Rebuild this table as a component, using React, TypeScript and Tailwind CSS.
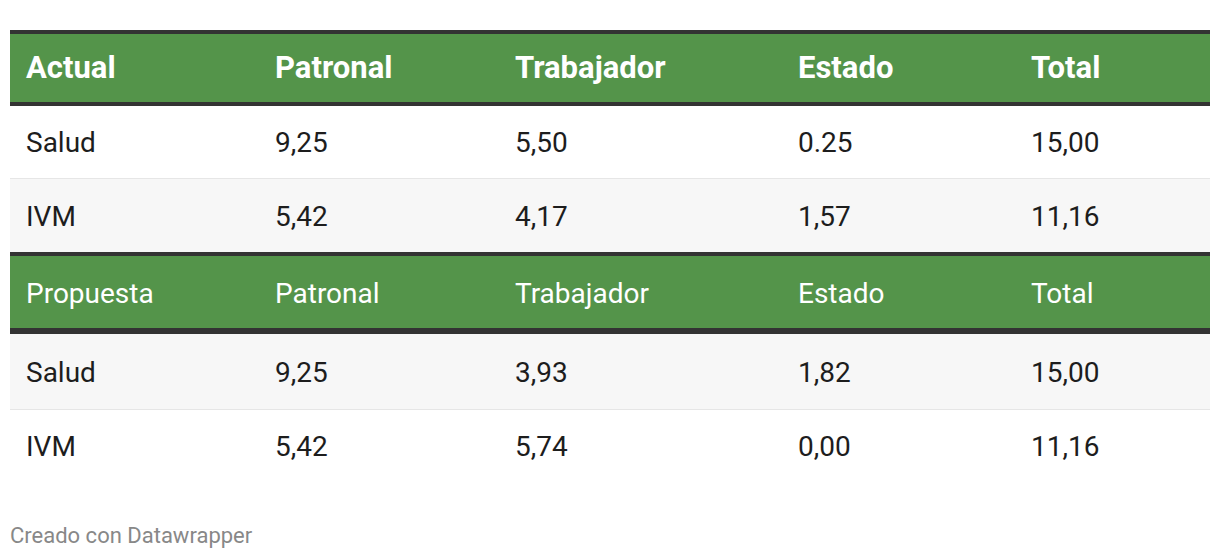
const cols = 'grid grid-cols-[249px_240px_283px_233px_195px]';

const HeaderRow = ({ cells, bold }: { cells: string[]; bold?: boolean }) => (
  <div
    className={`${cols} items-center bg-[#54944a] text-white ${
      bold ? 'h-[68px] font-bold text-[31px]' : 'h-[72px] pt-[3px] font-normal'
    }`}
  >
    {cells.map((c) => (
      <div key={c} className="pl-4">
        {c}
      </div>
    ))}
  </div>
);

const BodyRow = ({
  cells,
  shaded,
  line,
  h = 'h-[73px]',
}: {
  cells: string[];
  shaded?: boolean;
  line?: boolean;
  h?: string;
}) => (
  <div
    className={`${cols} ${h} items-center pt-[2px] text-[#1d1d1d] ${shaded ? 'bg-[#f7f7f7]' : 'bg-white'} ${
      line ? 'border-b border-[#e6e6e6]' : ''
    }`}
  >
    {cells.map((c, i) => (
      <div key={i} className="pl-4">
        {c}
      </div>
    ))}
  </div>
);

export default function App() {
  return (
    <div className="w-[1220px] h-[558px] bg-white px-[10px] pt-[30px] font-['Roboto',sans-serif] text-[28px]">
      <div className="border-t-4 border-[#333333]">
        <HeaderRow bold cells={['Actual', 'Patronal', 'Trabajador', 'Estado', 'Total']} />
        <div className="h-1 bg-[#333333]" />
        <BodyRow line cells={['Salud', '9,25', '5,50', '0.25', '15,00']} />
        <BodyRow shaded cells={['IVM', '5,42', '4,17', '1,57', '11,16']} />
        <div className="h-1 bg-[#333333]" />
        <HeaderRow cells={['Propuesta', 'Patronal', 'Trabajador', 'Estado', 'Total']} />
        <div className="h-[6px] bg-[#333333]" />
        <BodyRow shaded line h="h-[76px]" cells={['Salud', '9,25', '3,93', '1,82', '15,00']} />
        <BodyRow h="h-[72px]" cells={['IVM', '5,42', '5,74', '0,00', '11,16']} />
      </div>
      <div className="mt-[37px] text-[22px] text-[#888888]">Creado con Datawrapper</div>
    </div>
  );
}
